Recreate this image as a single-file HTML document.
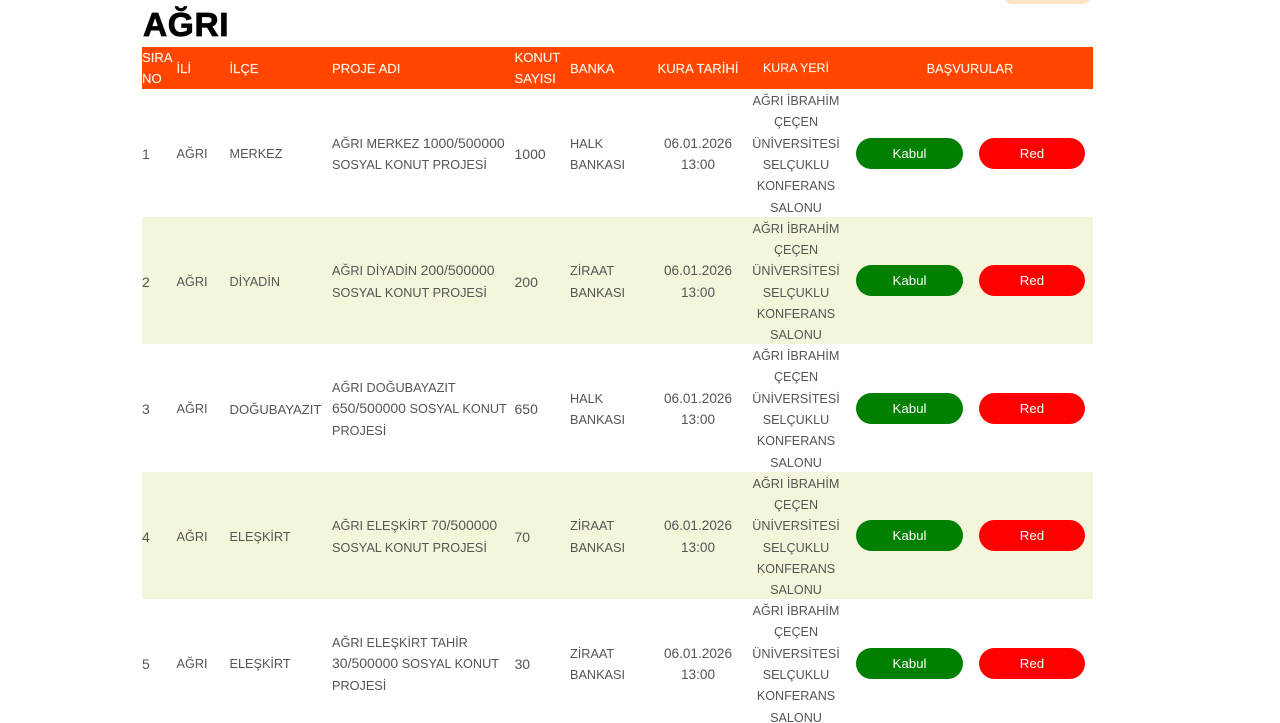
<!DOCTYPE html>
<html lang="tr">
<head>
<meta charset="utf-8">
<title>AĞRI</title>
<style>
html,body{margin:0;padding:0;background:#fff;width:1280px;height:723px;overflow:hidden}
body{position:relative;font-family:"Liberation Sans","DejaVu Sans",sans-serif;font-size:12.7px;color:#555}
h1{position:absolute;left:143px;top:6px;margin:0;font-size:33.5px;line-height:40px;font-weight:700;color:#000;-webkit-text-stroke:.8px #000;letter-spacing:.6px}
.pill{position:absolute;left:1003px;top:-20px;width:89px;height:24px;border-radius:10px;background:#ffe3c4}
table{position:absolute;left:142px;top:47px;width:951px;border-collapse:collapse;table-layout:fixed;line-height:21.3px}
th,td{padding:0;text-align:left;vertical-align:middle;font-weight:400;white-space:nowrap}
td{padding-top:4px}
td.n,td.d{padding-top:2px}
thead tr{height:42px;background:#ff4500}
th{color:#fff0e4;-webkit-text-stroke:.15px #fff0e4;line-height:21px;font-size:13.1px}
tbody tr:nth-child(odd){height:128px}
tbody tr:nth-child(even){height:127px;background:#f5f5dc}
.c{text-align:center}
.m{margin:-3px 0}
.n{font-size:14px;line-height:0}
.d{font-size:13.6px}
.y{font-size:12.6px}
.b{display:inline-block;width:107px;height:31px;line-height:31px;border-radius:16px;text-align:center;color:#fff;vertical-align:middle;font-size:13.3px}
.k{background:#008000;margin-left:9px}
.r{background:#ff0000;margin-left:16px;width:106px}
td.bc{padding-top:0}
</style>
</head>
<body>
<div class="pill"></div>
<h1>AĞRI</h1>
<table>
<colgroup><col style="width:34.5px"><col style="width:53px"><col style="width:102.5px"><col style="width:182.5px"><col style="width:55.5px"><col style="width:81px"><col style="width:94px"><col style="width:102px"><col style="width:246px"></colgroup>
<thead>
<tr><th>SIRA<br>NO</th><th>İLİ</th><th>İLÇE</th><th>PROJE ADI</th><th>KONUT<br>SAYISI</th><th>BANKA</th><th class="c">KURA TARİHİ</th><th class="c" style="font-size:12.4px">KURA YERİ</th><th class="c" style="font-size:12.8px">BAŞVURULAR</th></tr>
</thead>
<tbody>
<tr><td class="n">1</td><td>AĞRI</td><td>MERKEZ</td><td>AĞRI MERKEZ <span class="n">1000/500000</span><br>SOSYAL KONUT PROJESİ</td><td class="n">1000</td><td>HALK<br>BANKASI</td><td class="c d">06.01.2026<br>13:00</td><td class="c y"><div class="m">AĞRI İBRAHİM<br>ÇEÇEN<br>ÜNİVERSİTESİ<br>SELÇUKLU<br>KONFERANS<br>SALONU</div></td><td class="bc"><span class="b k">Kabul</span><span class="b r">Red</span></td></tr>
<tr><td class="n">2</td><td>AĞRI</td><td>DİYADİN</td><td>AĞRI DİYADİN <span class="n">200/500000</span><br>SOSYAL KONUT PROJESİ</td><td class="n">200</td><td>ZİRAAT<br>BANKASI</td><td class="c d">06.01.2026<br>13:00</td><td class="c y"><div class="m">AĞRI İBRAHİM<br>ÇEÇEN<br>ÜNİVERSİTESİ<br>SELÇUKLU<br>KONFERANS<br>SALONU</div></td><td class="bc"><span class="b k">Kabul</span><span class="b r">Red</span></td></tr>
<tr><td class="n">3</td><td>AĞRI</td><td style="font-size:13.1px">DOĞUBAYAZIT</td><td>AĞRI DOĞUBAYAZIT<br><span class="n">650/500000</span> SOSYAL KONUT<br>PROJESİ</td><td class="n">650</td><td>HALK<br>BANKASI</td><td class="c d">06.01.2026<br>13:00</td><td class="c y"><div class="m">AĞRI İBRAHİM<br>ÇEÇEN<br>ÜNİVERSİTESİ<br>SELÇUKLU<br>KONFERANS<br>SALONU</div></td><td class="bc"><span class="b k">Kabul</span><span class="b r">Red</span></td></tr>
<tr><td class="n">4</td><td>AĞRI</td><td>ELEŞKİRT</td><td>AĞRI ELEŞKİRT <span class="n">70/500000</span><br>SOSYAL KONUT PROJESİ</td><td class="n">70</td><td>ZİRAAT<br>BANKASI</td><td class="c d">06.01.2026<br>13:00</td><td class="c y"><div class="m">AĞRI İBRAHİM<br>ÇEÇEN<br>ÜNİVERSİTESİ<br>SELÇUKLU<br>KONFERANS<br>SALONU</div></td><td class="bc"><span class="b k">Kabul</span><span class="b r">Red</span></td></tr>
<tr><td class="n">5</td><td>AĞRI</td><td>ELEŞKİRT</td><td>AĞRI ELEŞKİRT TAHİR<br><span class="n">30/500000</span> SOSYAL KONUT<br>PROJESİ</td><td class="n">30</td><td>ZİRAAT<br>BANKASI</td><td class="c d">06.01.2026<br>13:00</td><td class="c y"><div class="m">AĞRI İBRAHİM<br>ÇEÇEN<br>ÜNİVERSİTESİ<br>SELÇUKLU<br>KONFERANS<br>SALONU</div></td><td class="bc"><span class="b k">Kabul</span><span class="b r">Red</span></td></tr>
</tbody>
</table>
</body>
</html>
